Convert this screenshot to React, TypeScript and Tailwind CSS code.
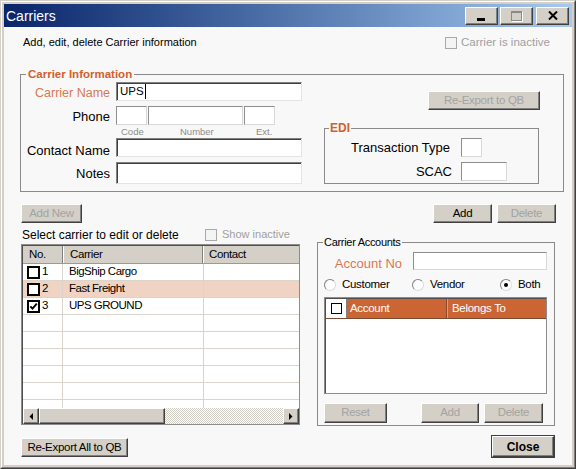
import type { ReactNode } from "react";

// ─── Classic Win32 bits ───────────────────────────────────────────────────────
function Btn({
  className = "",
  disabled = false,
  bold = false,
  children,
}: {
  className?: string;
  disabled?: boolean;
  bold?: boolean;
  children: ReactNode;
}) {
  return (
    <div
      className={`shrink-0 flex items-center justify-center bg-[#d4d0c8] border border-t-white border-l-white border-b-[#404040] border-r-[#404040] shadow-[inset_-1px_-1px_0_#808080] leading-none ${
        disabled ? "text-[#a3a3a3]" : "text-black"
      } ${bold ? "font-bold text-[12px]" : "text-[11.5px] tracking-[-0.3px]"} ${className}`}
    >
      {children}
    </div>
  );
}

function Field({ className = "", dark = true, children }: { className?: string; dark?: boolean; children?: ReactNode }) {
  return (
    <div
      className={`shrink-0 bg-white border flex items-center ${
        dark
          ? "border-t-[#808080] border-l-[#808080] border-b-[#e4e4e4] border-r-[#e4e4e4] shadow-[inset_1px_1px_0_#404040]"
          : "border-t-[#8e8e8e] border-l-[#8e8e8e] border-b-[#d8d8d8] border-r-[#d8d8d8]"
      } ${className}`}
    >
      {children}
    </div>
  );
}

function DisabledCheck() {
  return <span className="shrink-0 w-[12px] h-[12px] border border-[#a8a8a8] bg-[#f4f4f4]" />;
}

function RowCheck({ checked }: { checked?: boolean }) {
  return (
    <span className="shrink-0 w-[13px] h-[13px] border-2 border-black bg-white flex items-center justify-center">
      {checked && (
        <svg width="9" height="9" viewBox="0 0 9 9">
          <path d="M1.3 4.4 L3.5 6.7 L7.8 1.6" fill="none" stroke="#000" strokeWidth="1.9" />
        </svg>
      )}
    </span>
  );
}

function Radio({ checked, label, className = "" }: { checked?: boolean; label: string; className?: string }) {
  return (
    <div className={`flex items-center ${className}`}>
      <span className="shrink-0 w-[12px] h-[12px] rounded-full bg-white border border-t-[#808080] border-l-[#808080] border-b-[#dcdcdc] border-r-[#dcdcdc] flex items-center justify-center">
        {checked && <span className="w-[4px] h-[4px] rounded-full bg-black" />}
      </span>
      <span className="ml-[6px] text-[11.5px] tracking-[-0.3px] leading-none">{label}</span>
    </div>
  );
}

function Arrow({ dir }: { dir: "l" | "r" }) {
  return (
    <div className="shrink-0 w-[16px] h-full flex items-center justify-center bg-[#d4d0c8] border border-t-white border-l-white border-b-[#404040] border-r-[#404040] shadow-[inset_-1px_-1px_0_#808080]">
      <svg width="4" height="7" viewBox="0 0 4 7">
        {dir === "l" ? <path d="M4 0 L0.5 3.5 L4 7 Z" fill="#000" /> : <path d="M0 0 L3.5 3.5 L0 7 Z" fill="#000" />}
      </svg>
    </div>
  );
}

// ─── Title bar ────────────────────────────────────────────────────────────────
function TitleBar() {
  const cap =
    "shrink-0 w-[33px] h-[18px] bg-[#d4d0c8] border border-t-white border-l-white border-b-[#404040] border-r-[#404040] shadow-[inset_-1px_-1px_0_#808080] flex justify-center";
  return (
    <div className="h-[23px] shrink-0 flex items-center bg-gradient-to-r from-[#0a246a] to-[#a6caf0] pl-[2px] pr-[3px]">
      <span className="text-white text-[14px] leading-none">Carriers</span>
      <div className="ml-auto flex items-center">
        <div className={`${cap} items-end pb-[3px]`}>
          <span className="w-[8px] h-[3px] bg-black mr-[2px]" />
        </div>
        <div className={`${cap} items-center ml-[2px]`}>
          <span className="w-[11px] h-[10px] border border-t-2 border-[#8a8a8a] shadow-[1px_1px_0_#ffffff]" />
        </div>
        <div className={`${cap} items-center ml-[3px]`}>
          <svg width="10" height="9" viewBox="0 0 10 9">
            <path d="M1 0.5 L9 8.5 M9 0.5 L1 8.5" stroke="#000" strokeWidth="2" />
          </svg>
        </div>
      </div>
    </div>
  );
}

// ─── Carrier grid ─────────────────────────────────────────────────────────────
const carriers = [
  { no: 1, name: "BigShip Cargo", checked: false, hl: false },
  { no: 2, name: "Fast Freight", checked: false, hl: true },
  { no: 3, name: "UPS GROUND", checked: true, hl: false },
];

function CarrierGrid() {
  const rows = [...carriers, ...Array.from({ length: 6 }, () => null)];
  return (
    <div className="mt-[3px] w-[279px] h-[181px] border border-[#8c8c8c] shadow-[inset_1px_1px_0_#505050] bg-white flex flex-col overflow-hidden pl-[1px] pt-[1px]">
      <div className="h-[18px] shrink-0 flex bg-[#d4d0c8] border-b border-[#9a9a9a] text-[11.5px] tracking-[-0.4px] leading-none">
        <div className="w-[40px] flex items-center pl-[6px] border-r border-[#808080]">No.</div>
        <div className="w-[140px] flex items-center pl-[6px] border-l border-white border-r border-r-[#808080]">Carrier</div>
        <div className="flex-1 flex items-center pl-[5px] border-l border-white">Contact</div>
      </div>
      <div className="h-[144px] shrink-0 flex flex-col overflow-hidden">
        {rows.map((r, i) => (
          <div
            key={i}
            className={`h-[17px] shrink-0 flex border-b border-[#d9d5cd] text-[11.5px] tracking-[-0.5px] leading-none ${
              r && r.hl ? "bg-[#f1d3c3]" : "bg-white"
            }`}
          >
            <div className="w-[40px] flex items-center pl-[4px] border-r border-[#d9d5cd]">
              {r && (
                <>
                  <RowCheck checked={r.checked} />
                  <span className="ml-[2px]">{r.no}</span>
                </>
              )}
            </div>
            <div className="w-[141px] flex items-center pl-[6px] border-r border-[#d9d5cd]">{r && r.name}</div>
            <div className="flex-1" />
          </div>
        ))}
      </div>
      <div className="h-[16px] shrink-0 flex bg-[#d4d0c8]">
        <Arrow dir="l" />
        <div className="w-[126px] shrink-0 bg-[#d4d0c8] border border-t-white border-l-white border-b-[#404040] border-r-[#404040] shadow-[inset_-1px_-1px_0_#808080]" />
        <div className="flex-1 bg-[repeating-conic-gradient(#d4d0c8_0%_25%,#ffffff_0%_50%)] bg-[length:2px_2px]" />
        <Arrow dir="r" />
      </div>
    </div>
  );
}

// ─── Main App ─────────────────────────────────────────────────────────────────
export default function App() {
  const legendBg = "bg-[#f8f8f8]";
  return (
    <div className="w-[576px] h-[469px] bg-[#d4d0c8] border border-[#d4d0c8] border-r-[#404040] border-b-[#404040] font-['Liberation_Sans',Arial,sans-serif] text-black">
      <div className="w-full h-full border border-white border-r-[#808080] border-b-[#808080] p-[2px] flex flex-col">
        <TitleBar />

        <div className="flex-1 bg-[#f8f8f8] flex flex-col">
          {/* Intro line */}
          <div className="mt-[9px] h-[13px] flex items-center">
            <span className="ml-[19px] text-[11px] leading-none">Add, edit, delete Carrier information</span>
            <div className="ml-auto w-[123px] mr-[4px] flex items-center">
              <DisabledCheck />
              <span className="ml-[4px] text-[11.5px] leading-none text-[#a0a0a0]">Carrier is inactive</span>
            </div>
          </div>

          {/* Carrier Information */}
          <div className="relative mt-[25px] ml-[16px] w-[544px] h-[118px] shrink-0 border border-[#8a8a8a] flex">
            <span className={`absolute left-[5px] top-[-8px] px-[2px] leading-[14px] ${legendBg} text-[11.5px] font-bold text-[#d2602e]`}>
              Carrier Information
            </span>

            <div className="flex flex-col">
              <div className="mt-[7px] h-[19px] flex items-center">
                <span className="w-[89px] pt-[4px] text-right text-[12.5px] leading-none text-[#d9784f]">Carrier Name</span>
                <Field className="ml-[6px] w-[186px] h-[19px] pl-[3px]">
                  <span className="text-[11.5px] leading-none">UPS</span>
                  <span className="ml-[1px] w-[1px] h-[15px] bg-black" />
                </Field>
              </div>
              <div className="mt-[5px] h-[19px] flex items-center">
                <span className="w-[89px] pt-[2px] text-right text-[13px] leading-none">Phone</span>
                <Field dark={false} className="ml-[6px] w-[31px] h-[19px]" />
                <Field dark={false} className="ml-[1px] w-[95px] h-[19px]" />
                <Field dark={false} className="ml-[1px] w-[31px] h-[19px]" />
              </div>
              <div className="h-[13px] flex items-center text-[9.5px] leading-none text-[#8c8c8c]">
                <span className="ml-[100px] w-[59px]">Code</span>
                <span className="w-[76px]">Number</span>
                <span>Ext.</span>
              </div>
              <div className="h-[19px] flex items-center">
                <span className="w-[89px] pt-[5px] text-right text-[13px] leading-none">Contact Name</span>
                <Field className="ml-[6px] w-[186px] h-[19px]" />
              </div>
              <div className="mt-[5px] h-[22px] flex items-center">
                <span className="w-[89px] text-right text-[13px] leading-none">Notes</span>
                <Field className="ml-[6px] w-[186px] h-[22px]" />
              </div>
            </div>

            <div className="ml-[22px] flex flex-col">
              <Btn disabled className="mt-[16px] ml-[104px] w-[112px] h-[19px]">
                Re-Export to QB
              </Btn>
              <div className="relative mt-[18px] w-[215px] h-[56px] border border-[#8a8a8a]">
                <span className={`absolute left-[4px] top-[-8px] px-[1px] leading-[14px] ${legendBg} text-[12px] font-bold text-[#d2602e]`}>
                  EDI
                </span>
                <div className="mt-[9px] h-[19px] flex items-center">
                  <span className="w-[127px] pr-[2px] text-right text-[13px] leading-none">Transaction Type</span>
                  <Field dark={false} className="ml-[9px] w-[21px] h-[19px]" />
                </div>
                <div className="mt-[5px] h-[19px] flex items-center">
                  <span className="w-[127px] text-right text-[13px] leading-none">SCAC</span>
                  <Field dark={false} className="ml-[9px] w-[46px] h-[19px]" />
                </div>
              </div>
            </div>
          </div>

          {/* Add New / Add / Delete */}
          <div className="mt-[12px] h-[19px] flex">
            <Btn disabled className="ml-[17px] w-[61px] h-[19px]">
              Add New
            </Btn>
            <Btn className="ml-auto w-[59px] h-[19px]">Add</Btn>
            <Btn disabled className="ml-[5px] mr-[16px] w-[59px] h-[19px]">
              Delete
            </Btn>
          </div>

          {/* Lower section */}
          <div className="mt-[5px] flex items-start">
            <div className="ml-[17px] w-[279px] flex flex-col">
              <div className="h-[13px] flex items-center">
                <span className="w-[184px] pl-[1px] text-[12px] leading-none">Select carrier to edit or delete</span>
                <DisabledCheck />
                <span className="ml-[5px] text-[11px] leading-none text-[#a0a0a0]">Show inactive</span>
              </div>
              <CarrierGrid />
              <Btn className="mt-[13px] w-[107px] h-[19px]">Re-Export All to QB</Btn>
            </div>

            <div className="ml-[17px] w-[238px] flex flex-col">
              <div className="relative mt-[14px] h-[184px] border border-[#8a8a8a] flex flex-col">
                <span className={`absolute left-[5px] top-[-8px] px-[1px] leading-[14px] ${legendBg} text-[11px] tracking-[-0.3px]`}>
                  Carrier Accounts
                </span>
                <div className="mt-[9px] h-[18px] flex items-center">
                  <span className="w-[84px] pt-[4px] text-right text-[13px] leading-none text-[#d9784f]">Account No</span>
                  <Field dark={false} className="ml-[11px] w-[134px] h-[18px]" />
                </div>
                <div className="mt-[8px] h-[13px] flex items-center pl-[6px]">
                  <Radio label="Customer" className="w-[88px]" />
                  <Radio label="Vendor" className="w-[88px]" />
                  <Radio label="Both" checked />
                </div>
                <div className="mt-[6px] ml-[6px] w-[223px] h-[97px] border border-[#8c8c8c] shadow-[inset_1px_1px_0_#505050] bg-white flex flex-col pl-[1px] pt-[1px]">
                  <div className="h-[20px] shrink-0 flex border-b border-[#7a4a30] text-[11.5px] tracking-[-0.3px] leading-none text-white">
                    <div className="w-[21px] bg-white flex items-center pl-[5px] border-r border-[#808080]">
                      <span className="w-[11px] h-[11px] border border-black" />
                    </div>
                    <div className="w-[100px] bg-[#cb6634] flex items-center pl-[3px] border-r border-[#8e4a28]">Account</div>
                    <div className="flex-1 bg-[#cb6634] flex items-center pl-[4px] border-l border-[#e59a74]">Belongs To</div>
                  </div>
                </div>
                <div className="mt-[9px] ml-[6px] h-[20px] flex">
                  <Btn disabled className="w-[63px] h-[20px]">
                    Reset
                  </Btn>
                  <Btn disabled className="ml-[34px] w-[58px] h-[20px]">
                    Add
                  </Btn>
                  <Btn disabled className="ml-[5px] w-[59px] h-[20px]">
                    Delete
                  </Btn>
                </div>
              </div>
              <Btn bold className="mt-[10px] self-end mr-[1px] w-[62px] h-[21px] outline outline-1 outline-[#404040]">
                Close
              </Btn>
            </div>
          </div>
        </div>
      </div>
    </div>
  );
}
